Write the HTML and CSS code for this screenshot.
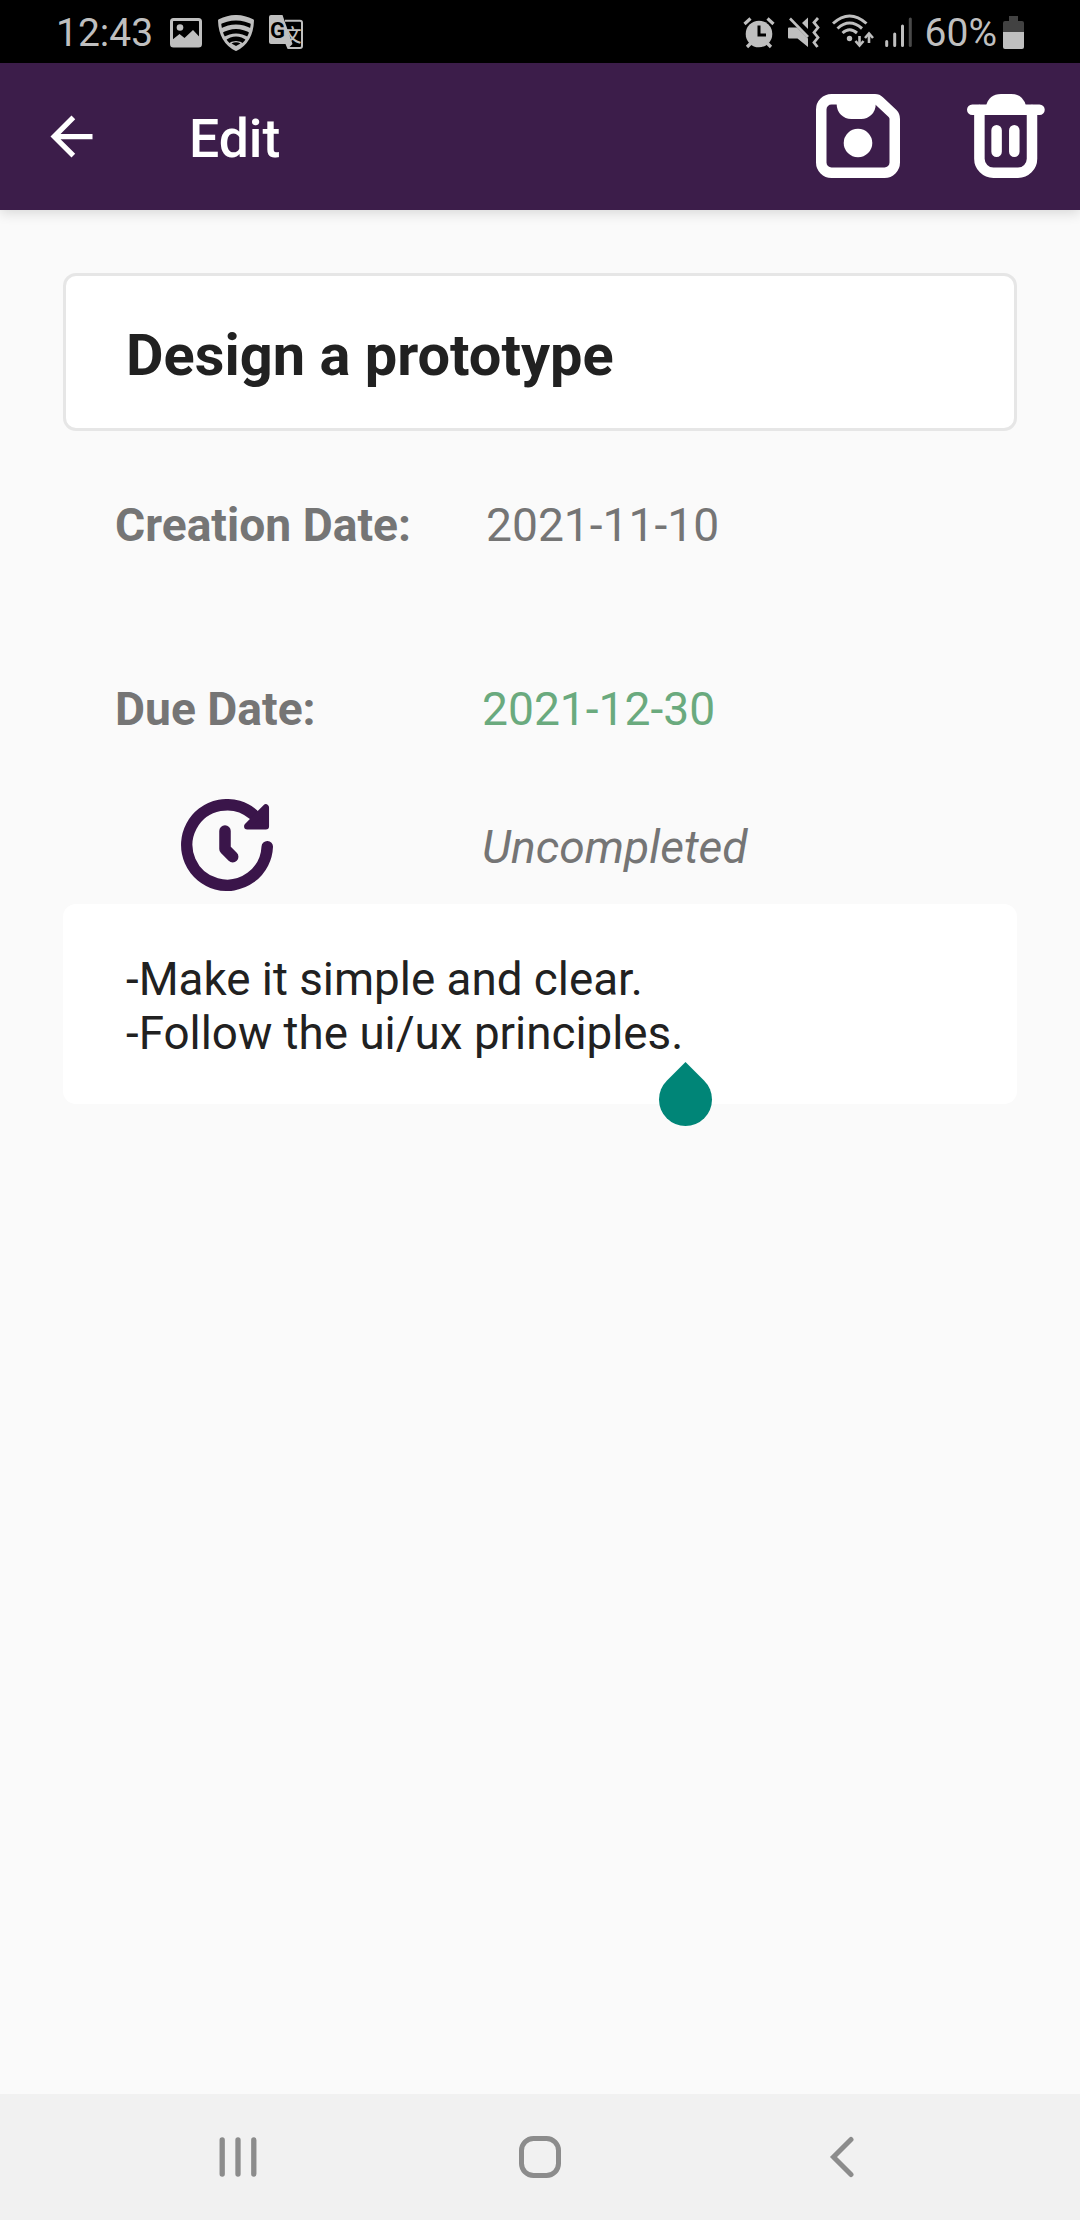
FILE: index.html
```html
<!DOCTYPE html>
<html lang="en">
<head>
<meta charset="utf-8">
<title>Edit task</title>
<link rel="stylesheet" href="styles.css">
</head>
<body>
<div class="screen">
  <header class="status">
    <span class="status-text">12:43</span>
    <div class="status-left">
      <svg width="32" height="30" viewBox="0 0 32 30"><rect x="1.500" y="1.500" width="29" height="26.500" rx="2" fill="none" stroke="#bfbfbf" stroke-width="3"/><circle cx="10" cy="9.500" r="3.300" fill="#bfbfbf"/><path d="M2 22l7.500-6 5 4 8.500-8 7.500 8v8H2z" fill="#bfbfbf"/></svg>
      <svg width="36" height="36" viewBox="0 0 36 36" fill="none"><path d="M1.500 5.500Q18-2.500 34.500 5.500C34 20 28 29.500 18 34.500 8 29.500 2 20 1.500 5.500z" fill="#bfbfbf"/><path d="M1 12Q18 3 35 12M4 20.500Q18 12 32 20.500M8 27.500Q18 20 28 27.500" stroke="#000" stroke-width="4.200"/><path d="M13.500 28.500Q18 26 22.500 28.500L18 31z" fill="#000"/><path d="M1.500 5.500Q18-2.500 34.500 5.500C34 20 28 29.500 18 34.500 8 29.500 2 20 1.500 5.500z" stroke="#bfbfbf" stroke-linejoin="round" stroke-width="3"/></svg>
      <svg width="35" height="35" viewBox="0 0 35 35"><path d="M16 5.700H31a2 2 0 0 1 2 2V31a2 2 0 0 1-2 2H19" fill="none" stroke="#bfbfbf" stroke-width="2"/><path d="M2 0H13.500L23.500 29 18.500 34 16.500 29H2a2 2 0 0 1-2-2V2a2 2 0 0 1 2-2z" fill="#bfbfbf"/><text x="1" y="23" class="glyph-g">G</text><text x="14.500" y="26.500" class="glyph-cjk">文</text></svg>
    </div>
    <div class="status-right">
      <svg class="alarm" width="32" height="32" viewBox="0 0 32 32"><circle cx="16" cy="17" r="13.300" fill="#bfbfbf"/><path d="M1.500 7L7.500 1.500M30.500 7L24.500 1.500M4 30l4-4M28 30l-4-4" stroke="#bfbfbf" stroke-width="3.200" fill="none"/><path d="M16 8.500v9.500h7" fill="none" stroke="#000" stroke-width="3"/></svg>
      <svg class="mute" width="32" height="32" viewBox="0 0 32 32" fill="#bfbfbf"><path d="M1 10.500h8L20 21.500V30L9.500 21.500H1a1 1 0 0 1-1-1v-9a1 1 0 0 1 1-1z"/><path d="M14 6l6-5.500V12z"/><path d="M2 1.500L20 20" stroke="#bfbfbf" stroke-width="2.600"/><path d="M30 1l-4 4.500 4 5-4 5 4 5-4 5 3.500 4.500" fill="none" stroke="#bfbfbf" stroke-width="2.800"/></svg>
      <svg class="wifi" width="42" height="34" viewBox="0 0 42 34" fill="none" stroke="#bfbfbf" stroke-width="3"><path d="M1 9.500Q17.500-5.500 34.500 9.500M5.500 14.500Q17.500 3.500 30 14.500M10.500 19Q17.500 12.500 25 19"/><circle cx="17.500" cy="24.500" r="2.700" fill="#bfbfbf" stroke="none"/><path d="M27.500 22v9M37 20v9" stroke-width="2.600"/><path d="M23.500 27l4 4.500 4-4.500M33 24l4-4.500 4 4.500" stroke-width="2.600"/></svg>
      <svg class="signal" width="27" height="31" viewBox="0 0 27 31" stroke="#bfbfbf" stroke-width="3" stroke-linecap="round"><path d="M1.700 24.500v4M9.700 17v11.500M17.500 9v19.500"/><path d="M25.300 2v26.500" stroke="#4a4a4a"/></svg>
      <span class="status-text pct">60%</span>
      <svg class="battery" width="21" height="33" viewBox="0 0 21 33"><path d="M6 0h9v5h4a2 2 0 0 1 2 2v9H0V7a2 2 0 0 1 2-2h4z" fill="#424242"/><path d="M0 16h21v15a2 2 0 0 1-2 2H2a2 2 0 0 1-2-2z" fill="#bfbfbf"/></svg>
    </div>
  </header>

  <div class="appbar">
    <svg width="63" height="63" viewBox="0 0 24 24" fill="#fff"><path d="M20 11H7.830l5.590-5.590L12 4l-8 8 8 8 1.410-1.410L7.830 13H20z"/></svg>
    <h1 class="appbar-title">Edit</h1>
    <div class="actions">
      <svg width="84" height="84" viewBox="0 0 84 84"><path d="M15.500 5.250H59Q61.500 5.250 63.500 7.200L76.500 19.500Q78.750 21.800 78.750 25V68.500a10.250 10.250 0 0 1-10.250 10.250H15.500A10.250 10.250 0 0 1 5.250 68.500V15.500A10.250 10.250 0 0 1 15.500 5.250z" fill="none" stroke="#fff" stroke-width="10.500"/><path d="M20.700 8H59.700V10.500A14.500 14.500 0 0 1 45.200 25H35.200A14.500 14.500 0 0 1 20.700 10.500z" fill="#fff"/><circle cx="42" cy="49" r="14.300" fill="#fff"/></svg>
      <svg width="78" height="84" viewBox="0 0 78 84" fill="none" stroke="#fff" stroke-width="10.500" stroke-linecap="round"><path d="M5.250 15.750H72.500M29.600 36.300V57.700M47.300 36.300V57.700"/><path d="M12.400 16V64.750a14 14 0 0 0 14 14H51a14 14 0 0 0 14-14V16"/><path d="M19 12Q22 0 34 0H44Q56 0 59 12z" fill="#fff" stroke="none"/></svg>
    </div>
  </div>

  <main class="content">
    <div class="title-field">Design a prototype</div>
    <div class="row row-created"><span class="label">Creation Date:</span><span class="value">2021-11-10</span></div>
    <div class="row row-due"><span class="label">Due Date:</span><span class="value due">2021-12-30</span></div>
    <div class="row row-state">
      <span class="label state-icon"><svg width="92" height="92" viewBox="0 0 92 92" fill="none" stroke="#3a154a" stroke-width="11.500" stroke-linecap="round" stroke-linejoin="round"><path d="M86.250 47.700A40.250 40.250 0 1 1 72.300 15.500"/><path d="M44 32V50L51.700 57.700"/><path d="M84.800 8.500V27.200H66.300z" fill="#3a154a" stroke-width="6.500"/></svg></span>
      <span class="value state">Uncompleted</span>
    </div>
    <div class="notes">-Make it simple and clear.<br>-Follow the ui/ux principles.<span class="handle"></span></div>
  </main>

  <nav class="navbar">
    <svg width="38" height="42" viewBox="0 0 38 42" stroke="#8c8c8c" stroke-width="5.300" stroke-linecap="round"><path d="M3.200 4v34M19 4v34M34.800 4v34"/></svg>
    <svg width="42" height="42" viewBox="0 0 42 42"><rect x="2.500" y="2.500" width="37" height="37" rx="12" fill="none" stroke="#8c8c8c" stroke-width="5"/></svg>
    <svg width="38" height="42" viewBox="0 0 38 42" fill="none" stroke="#8c8c8c" stroke-width="5" stroke-linecap="round"><path d="M28 3.500L10.500 21 28 38.500"/></svg>
  </nav>
</div>
</body>
</html>
```
FILE: styles.css
```css
* { box-sizing: border-box; }
body { margin: 0; font-family: Roboto, sans-serif; }
svg { display: block; flex: none; }

.screen {
  display: flex;
  flex-direction: column;
  width: 1080px;
  height: 2220px;
  background: #fafafa;
}

.status {
  display: flex;
  align-items: center;
  flex: none;
  height: 63px;
  padding: 2px 56px 0 56px;
  background: #000;
}
.status-text { font-size: 39px; line-height: 46px; color: #bfbfbf; }
.status-left { display: flex; align-items: center; gap: 15.5px; margin-left: 17px; }
.status-right { display: flex; align-items: center; margin-left: auto; }
.mute { margin-left: 13px; }
.wifi { margin: -4px 0 0 12px; }
.signal { margin-left: 11px; }
.pct { margin-left: 13px; }
.battery { margin-left: 6px; }
.glyph-g { font: 700 22px Roboto, sans-serif; fill: #000; }
.glyph-cjk { font: 500 18px "Noto Sans CJK SC", sans-serif; fill: #bfbfbf; }

.appbar {
  display: flex;
  align-items: center;
  flex: none;
  height: 147px;
  padding: 0 35px 0 40px;
  background: #3c1d4a;
  box-shadow: 0 3px 12px rgba(0, 0, 0, 0.14);
}
.appbar-title {
  margin: 5px 0 0 86px;
  font-size: 53.5px;
  font-weight: 500;
  line-height: 62px;
  color: #fff;
}
.actions { display: flex; gap: 67px; margin: -2px 0 0 auto; }

.content { flex: 1; padding: 63px 63px 0; }

.title-field {
  height: 158px;
  padding: 45px 60px 0;
  border: 3px solid #e6e6e6;
  border-radius: 13px;
  background: #fff;
  font-size: 57.75px;
  font-weight: 700;
  line-height: 68px;
  color: #212121;
}

.row {
  display: flex;
  align-items: center;
  height: 70px;
  padding-left: 52px;
  font-size: 46.2px;
  color: #757575;
}
.label { width: 367px; font-weight: 700; }
.row-created { margin-top: 59px; }
.row-created .label { width: 371px; }
.row-due { margin-top: 114px; }
.due { color: #6aaa7e; }
.row-state { height: 92px; margin-top: 55px; }
.state-icon { padding-left: 66px; }
.state { padding-top: 4px; font-style: italic; }

.notes {
  height: 200px;
  margin-top: 13px;
  padding: 49px 63px 0;
  border-radius: 13px;
  background: #fff;
  font-size: 45.75px;
  line-height: 54px;
  color: #212121;
}
/* Text cursor handle hanging below the caret */
.handle { position: relative; }
.handle::before {
  content: "";
  position: absolute;
  top: 66px;
  left: -24px;
  width: 53px;
  height: 53px;
  border-radius: 0 50% 50% 50%;
  background: #008577;
  transform: rotate(45deg);
}

.navbar {
  display: flex;
  align-items: center;
  justify-content: space-between;
  flex: none;
  height: 126px;
  padding: 0 219px;
  background: #f1f1f1;
}
```
